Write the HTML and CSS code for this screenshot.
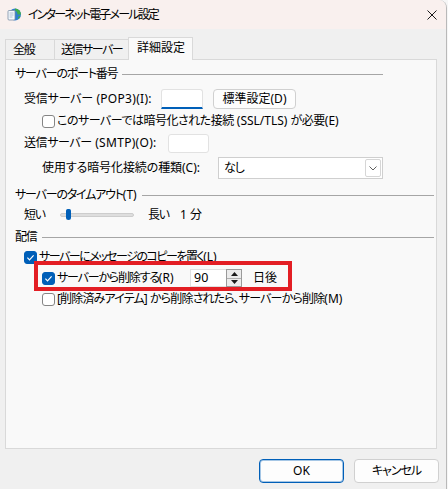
FILE: index.html
```html
<!DOCTYPE html>
<html lang="ja">
<head>
<meta charset="utf-8">
<title>インターネット電子メール設定</title>
<link rel="stylesheet" href="styles.css">
</head>
<body>
<div class="window">
  <div class="titlebar">
    <svg class="app-icon" viewBox="0 0 15 15">
      <circle cx="9" cy="7.5" r="6" fill="#2f7fd0"/>
      <path d="M9 1.5a6 6 0 0 1 6 6h-3.5c0-2-1-3.5-2.5-4z" fill="#3fae49"/>
      <path d="M12 10l2.5-1.5a6 6 0 0 1-2 3.5z" fill="#3fae49"/>
      <rect x="2" y="3.5" width="7" height="9.5" rx="1" fill="#f4f8fc" stroke="#7a8ea6" stroke-width="0.8"/>
      <path d="M3.5 6h4M3.5 8h4M3.5 10h3" stroke="#9db3cc" stroke-width="0.8"/>
    </svg>
    <span class="title">インターネット電子メール設定</span>
    <svg class="close" viewBox="0 0 10 10"><path d="M0.5 0.5L9.5 9.5M9.5 0.5L0.5 9.5" stroke="#1a1a1a" stroke-width="1"/></svg>
  </div>
  <div class="client">
    <div class="tabs">
      <div class="tab tab-general">全般</div>
      <div class="tab tab-send">送信サーバー</div>
      <div class="tab tab-adv active">詳細設定</div>
    </div>
    <div class="panel">
      <div class="group-head head-port"><span class="head-text">サーバーのポート番号</span><i class="rule"></i></div>
      <div class="row row-pop">
        <span class="label lbl-pop">受信サーバー<span class="lat"> (POP3)(I):</span></span>
        <span class="input input-pop"></span>
        <span class="btn">標準設定<span class="lat">(D)</span></span>
      </div>
      <div class="row row-ssl">
        <span class="check"></span>
        <span class="label lbl-ssl">このサーバーでは暗号化された接続<span class="lat"> (SSL/TLS) </span>が必要<span class="lat">(E)</span></span>
      </div>
      <div class="row row-smtp">
        <span class="label lbl-smtp">送信サーバー<span class="lat"> (SMTP)(O):</span></span>
        <span class="input input-smtp"></span>
      </div>
      <div class="row row-enc">
        <span class="label lbl-enc">使用する暗号化接続の種類<span class="lat">(C):</span></span>
        <span class="combo">
          <span class="combo-text">なし</span>
          <span class="combo-btn"><svg viewBox="0 0 8 5" class="chev"><path d="M0.5 0.5L4 4L7.5 0.5" fill="none" stroke="#606060" stroke-width="1"/></svg></span>
        </span>
      </div>
      <div class="group-head head-time"><span class="head-text">サーバーのタイムアウト<span class="lat">(T)</span></span><i class="rule"></i></div>
      <div class="row row-slider">
        <span class="label lbl-short">短い</span>
        <span class="track"><span class="thumb"></span></span>
        <span class="label lbl-long">長い</span>
        <span class="label"><span class="lat">1 </span>分</span>
      </div>
      <div class="group-head head-deliv"><span class="head-text">配信</span><i class="rule"></i></div>
      <div class="row row-leave">
        <span class="check checked"><svg viewBox="0 0 13 13"><path d="M3.4 6.7L5.5 8.8L9.6 4.4" fill="none" stroke="#fff" stroke-width="1.2"/></svg></span>
        <span class="label lbl-leave">サーバーにメッセージのコピーを置く<span class="lat">(L)</span></span>
      </div>
      <div class="row row-remove">
        <span class="check checked"><svg viewBox="0 0 13 13"><path d="M3.4 6.7L5.5 8.8L9.6 4.4" fill="none" stroke="#fff" stroke-width="1.2"/></svg></span>
        <span class="label lbl-remove">サーバーから削除する<span class="lat">(R)</span></span>
        <span class="spin">
          <span class="spin-field lat">90</span>
          <span class="spin-btns">
            <span class="spin-up"><svg viewBox="0 0 7 4"><path d="M0 4L3.5 0L7 4z" fill="#1a1a1a"/></svg></span>
            <span class="spin-down"><svg viewBox="0 0 7 4"><path d="M0 0L3.5 4L7 0z" fill="#1a1a1a"/></svg></span>
          </span>
        </span>
        <span class="label lbl-days">日後</span>
      </div>
      <div class="row row-deleted">
        <span class="check"></span>
        <span class="label lbl-deleted">[削除済みアイテム]<span class="lat"> </span>から削除されたら、サーバーから削除<span class="lat">(M)</span></span>
      </div>
      <div class="highlight"></div>
    </div>
    <div class="footer">
      <button class="dlg-btn default"><span class="lat">OK</span></button>
      <button class="dlg-btn">キャンセル</button>
    </div>
  </div>
</div>
</body>
</html>
```
FILE: styles.css
```css
* { box-sizing: border-box; }
html, body { margin: 0; padding: 0; }
body {
  width: 448px;
  height: 489px;
  overflow: hidden;
  background: #f6f6f6;
  font-family: "Noto Sans", "Noto Sans CJK JP", sans-serif;
  font-size: 12px;
  color: #000;
  font-feature-settings: "palt";
  letter-spacing: -1.2px;
}
.lat { letter-spacing: 0; }
.window {
  width: 447px;
  height: 489px;
  background: #f0f0f0;
  border-right: 1px solid #b9b9b9;
  border-top-right-radius: 8px;
  overflow: hidden;
}
.titlebar {
  height: 29px;
  background: #f9f0ee;
  display: flex;
  align-items: center;
  padding-left: 6px;
}
.app-icon { width: 15px; height: 15px; flex: none; }
.title { margin-left: 7px; line-height: 16px; white-space: nowrap; letter-spacing: -1.8px; }
.close { margin-left: auto; margin-right: 9px; width: 10px; height: 10px; flex: none; }

.client { padding: 8px 0 0 5px; }
.tabs { display: flex; align-items: flex-end; height: 22px; }
.tab {
  height: 20px;
  border: 1px solid #d9d9d9;
  border-bottom: none;
  background: #f0f0f0;
  line-height: 19px;
  white-space: nowrap;
  margin-right: -1px;
}
.tab-general { width: 50px; padding-left: 7px; }
.tab-send { width: 75px; padding-left: 6px; letter-spacing: -1.5px; }
.tab-adv { width: 65px; padding-left: 8px; letter-spacing: 0; }
.tab.active {
  height: 23px;
  margin-bottom: -1px;
  background: #f9f9f9;
  position: relative;
  z-index: 1;
  line-height: 20px;
}

.panel {
  position: relative;
  width: 432px;
  height: 390px;
  background: #f9f9f9;
  border: 1px solid #d9d9d9;
  padding-top: 5px;
}
.row { display: flex; align-items: center; line-height: 16px; white-space: nowrap; }
.label { white-space: nowrap; flex: none; }

.group-head { display: flex; align-items: center; height: 18px; padding-left: 9px; line-height: 16px; }
.head-text { white-space: nowrap; flex: none; }
.rule { flex: 1; height: 1px; background: #a6a6a6; margin-left: 5px; }
.head-port .rule { margin-right: 53px; }
.head-time .rule, .head-deliv .rule { margin-right: 2px; }

.row-pop { height: 20px; margin-top: 6px; padding-left: 18px; }
.lbl-pop { width: 137px; letter-spacing: -0.2px; }
.lbl-pop .lat, .lbl-smtp .lat { letter-spacing: 0.3px; }
.input { background: #fff; border: 1px solid #e2e2e2; border-radius: 3px; flex: none; }
.input-pop { width: 42px; height: 20px; border-bottom: 2px solid #005fb8; border-radius: 3px 3px 0 0; }
.btn {
  margin-left: 10px;
  height: 20px;
  width: 83px;
  border: 1px solid #d0d0d0;
  border-radius: 4px;
  background: #fdfdfd;
  text-align: center;
  line-height: 18px;
  flex: none;
  letter-spacing: 0;
}

.row-ssl { height: 18px; margin-top: 3px; padding-left: 36px; }
.lbl-ssl { letter-spacing: -0.5px; }
.check {
  width: 13px;
  height: 13px;
  border: 1px solid #858585;
  border-radius: 3px;
  background: #fff;
  margin-right: 2px;
  flex: none;
  display: flex;
}
.check svg { width: 13px; height: 13px; margin: -1px; }
.check.checked { background: #005fb8; border-color: #005fb8; }

.row-smtp { height: 20px; margin-top: 3px; padding-left: 18px; }
.lbl-smtp { width: 144px; letter-spacing: -0.4px; }
.input-smtp { width: 41px; height: 19px; }

.row-enc { height: 22px; margin-top: 4px; padding-left: 36px; }
.lbl-enc { width: 176px; letter-spacing: -0.1px; }
.combo {
  width: 165px;
  height: 22px;
  background: #fff;
  border: 1px solid #cfcfcf;
  display: flex;
  align-items: center;
  padding-left: 5px;
  flex: none;
}
.combo-text { flex: 1; }
.combo-btn {
  width: 16px;
  height: 18px;
  margin-right: 1px;
  border: 1px solid #d6d6d6;
  border-radius: 2px;
  display: flex;
  align-items: center;
  justify-content: center;
}
.chev { width: 8px; height: 5px; }

.head-time { margin-top: 7px; }
.row-slider { height: 18px; margin-top: 2px; padding-left: 18px; }
.lbl-short { width: 36px; }
.track {
  position: relative;
  width: 74px;
  height: 4px;
  background: #dedede;
  border: 1px solid #cdcdcd;
  border-radius: 2px;
  flex: none;
}
.thumb {
  position: absolute;
  left: 5px;
  top: -5px;
  width: 5px;
  height: 11px;
  border-radius: 2px 2px 3px 3px;
  background: #005fb8;
}
.lbl-long { margin-left: 14px; width: 32px; }

.head-deliv { margin-top: 4px; }
.row-leave { height: 18px; margin-top: 2px; padding-left: 18px; }
.lbl-leave { letter-spacing: -1.5px; }
.row-remove { height: 18px; margin-top: 3px; padding-left: 36px; }
.lbl-remove { width: 133px; }
.spin { display: flex; height: 18px; flex: none; }
.spin-field {
  width: 36px;
  height: 18px;
  background: #fff;
  border: 1px solid #e0e0e0;
  border-right: none;
  padding-left: 3px;
  line-height: 16px;
  font-size: 12.5px;
}
.spin-btns {
  width: 16px;
  height: 18px;
  border: 1px solid #9a9a9a;
  background: #ececec;
  display: flex;
  flex-direction: column;
}
.spin-up, .spin-down { flex: 1; display: flex; align-items: center; justify-content: center; }
.spin-up { border-bottom: 1px solid #b0b0b0; }
.spin-up svg, .spin-down svg { width: 7px; height: 4px; }
.lbl-days { margin-left: 11px; letter-spacing: 0; }
.row-deleted { height: 18px; margin-top: 3px; padding-left: 36px; }
.lbl-deleted { letter-spacing: -0.85px; }

.highlight {
  position: absolute;
  left: 28px;
  top: 201px;
  width: 258px;
  height: 30px;
  border: 4px solid #e31e24;
}

.footer { display: flex; justify-content: flex-end; gap: 10px; margin-top: 10px; padding-right: 7px; }
.dlg-btn {
  width: 85px;
  height: 24px;
  border: 1px solid #d0d0d0;
  border-radius: 4px;
  background: #fdfdfd;
  font-family: inherit;
  font-size: 12px;
  font-feature-settings: "palt";
  letter-spacing: -1px;
  color: #000;
  padding: 0;
  line-height: 20px;
}
.dlg-btn.default { border-color: #005fb8; box-shadow: inset 0 0 0 1px rgba(0, 95, 184, 0.35); }
```
